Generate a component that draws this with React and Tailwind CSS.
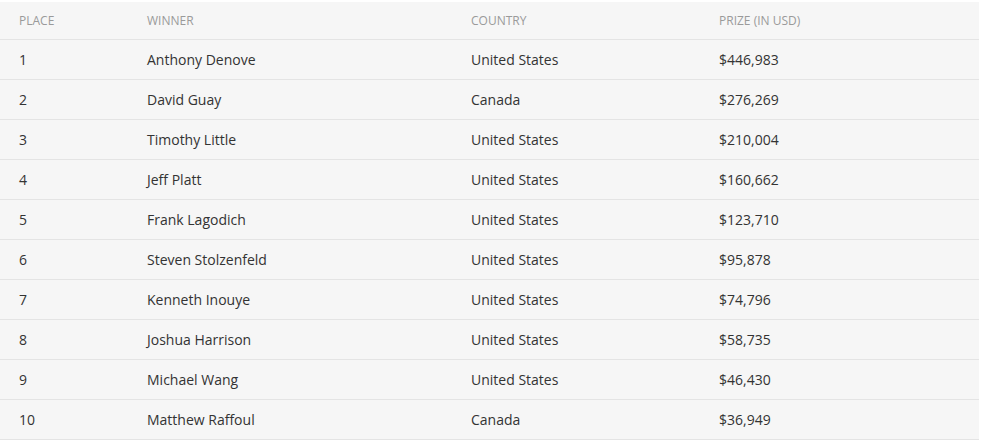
import React from 'react';

const winners = [
  { place: 1, name: 'Anthony Denove', country: 'United States', prize: '$446,983' },
  { place: 2, name: 'David Guay', country: 'Canada', prize: '$276,269' },
  { place: 3, name: 'Timothy Little', country: 'United States', prize: '$210,004' },
  { place: 4, name: 'Jeff Platt', country: 'United States', prize: '$160,662' },
  { place: 5, name: 'Frank Lagodich', country: 'United States', prize: '$123,710' },
  { place: 6, name: 'Steven Stolzenfeld', country: 'United States', prize: '$95,878' },
  { place: 7, name: 'Kenneth Inouye', country: 'United States', prize: '$74,796' },
  { place: 8, name: 'Joshua Harrison', country: 'United States', prize: '$58,735' },
  { place: 9, name: 'Michael Wang', country: 'United States', prize: '$46,430' },
  { place: 10, name: 'Matthew Raffoul', country: 'Canada', prize: '$36,949' }
];

const App = () => {
  return (
    <div className="w-[982px] h-[442px] bg-white pt-[2px] font-['Open_Sans',sans-serif]">
      <div className="w-[979px] bg-[#f6f6f6]">
        {/* header */}
        <div className="grid grid-cols-[128px_324px_248px_1fr] h-[38px] items-center border-b border-[#e4e4e4] pl-[19px] text-[12px] uppercase text-[#9a9a9a]">
          <div>Place</div>
          <div>Winner</div>
          <div>Country</div>
          <div>Prize (in USD)</div>
        </div>

        {winners.map((w) => (
          <div
            key={w.place}
            className="grid grid-cols-[128px_324px_248px_1fr] h-[40px] items-center border-b border-[#e4e4e4] pl-[19px] text-[14px] text-[#333333]"
          >
            <div>{w.place}</div>
            <div>{w.name}</div>
            <div>{w.country}</div>
            <div>{w.prize}</div>
          </div>
        ))}
      </div>
    </div>
  );
};

export default App;
